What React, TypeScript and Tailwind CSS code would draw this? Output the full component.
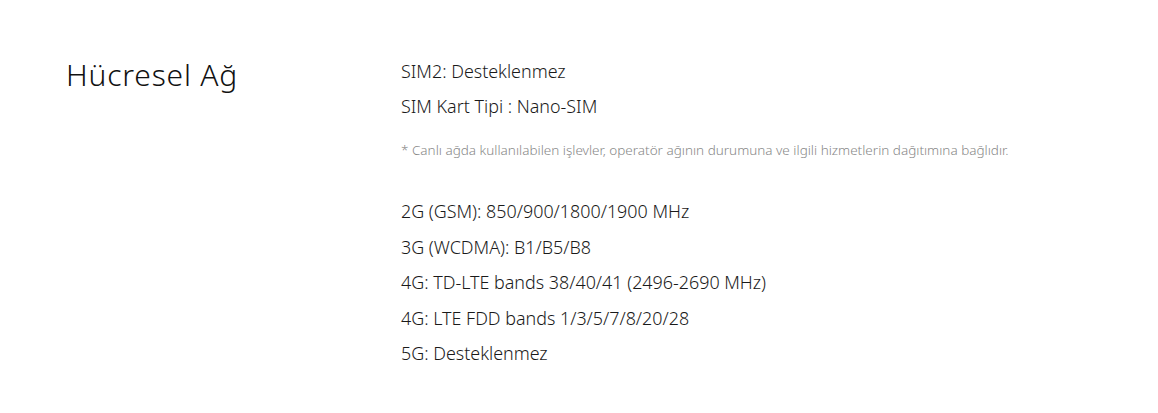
export default function App() {
  return (
    <div className="w-[1158px] h-[413px] bg-white flex pt-[55px] pl-[66px]" style={{ fontFamily: "'Noto Sans', sans-serif" }}>
      <div className="w-[335px] shrink-0">
        <h2 className="text-[30px] leading-[40px] text-[#111] font-light tracking-[0.8px]">Hücresel Ağ</h2>
      </div>
      <div className="flex flex-col text-[17.9px] text-[#1a1a1a] font-[360]">
        <div className="flex flex-col gap-[9px] leading-[26px] pt-[3px]">
          <p>SIM2: Desteklenmez</p>
          <p>SIM Kart Tipi : Nano-SIM</p>
        </div>
        <p className="text-[13.5px] text-[#888] mt-[22px] leading-[18px] font-[350]">* Canlı ağda kullanılabilen işlevler, operatör ağının durumuna ve ilgili hizmetlerin dağıtımına bağlıdır.</p>
        <div className="flex flex-col gap-[9.6px] leading-[26px] mt-[39px]">
          <p>2G (GSM): 850/900/1800/1900 MHz</p>
          <p>3G (WCDMA): B1/B5/B8</p>
          <p>4G: TD-LTE bands 38/40/41 (2496-2690 MHz)</p>
          <p>4G: LTE FDD bands 1/3/5/7/8/20/28</p>
          <p>5G: Desteklenmez</p>
        </div>
      </div>
    </div>
  );
}
